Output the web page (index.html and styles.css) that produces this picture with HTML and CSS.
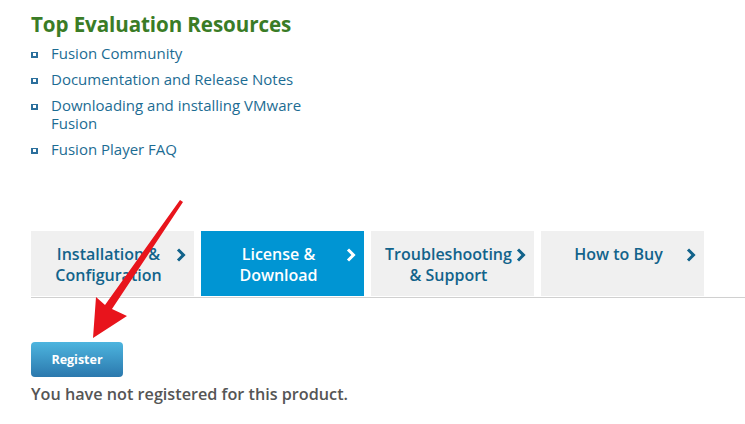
FILE: index.html
```html
<!DOCTYPE html>
<html>
<head>
<meta charset="utf-8">
<link rel="stylesheet" href="styles.css">
</head>
<body>
<div class="page">
  <h2 class="title">Top Evaluation Resources</h2>
  <ul class="links">
    <li><span class="bullet"></span><a>Fusion Community</a></li>
    <li><span class="bullet"></span><a>Documentation and Release Notes</a></li>
    <li><span class="bullet"></span><a>Downloading and installing VMware Fusion</a></li>
    <li><span class="bullet"></span><a>Fusion Player FAQ</a></li>
  </ul>
  <div class="tabs">
    <div class="tab"><span class="label">Installation &amp;<br>Configuration</span><svg class="chev" width="10" height="14" viewBox="0 0 10 14"><polyline points="2,1.5 7.5,7 2,12.5" fill="none" stroke="currentColor" stroke-width="3"/></svg></div>
    <div class="tab active"><span class="label">License &amp;<br>Download</span><svg class="chev" width="10" height="14" viewBox="0 0 10 14"><polyline points="2,1.5 7.5,7 2,12.5" fill="none" stroke="currentColor" stroke-width="3"/></svg></div>
    <div class="tab"><span class="label">Troubleshooting<br>&amp; Support</span><svg class="chev" width="10" height="14" viewBox="0 0 10 14"><polyline points="2,1.5 7.5,7 2,12.5" fill="none" stroke="currentColor" stroke-width="3"/></svg></div>
    <div class="tab"><span class="label">How to Buy</span><svg class="chev" width="10" height="14" viewBox="0 0 10 14"><polyline points="2,1.5 7.5,7 2,12.5" fill="none" stroke="currentColor" stroke-width="3"/></svg></div>
  </div>
  <div class="register">
    <button class="btn">Register</button>
    <p class="note">You have not registered for this product.</p>
  </div>
  <svg class="arrow" width="745" height="424" viewBox="0 0 745 424">
    <polygon fill="#e8141c" points="180,200 183,202 112,309 127,316 93,338 96,297 105,305"/>
  </svg>
</div>
</body>
</html>
```
FILE: styles.css
```css
* { box-sizing: border-box; }
html, body { margin: 0; padding: 0; background: #fff; }
body { font-family: "Open Sans", "Liberation Sans", sans-serif; }
.page { position: relative; width: 745px; height: 424px; overflow: hidden; padding: 11px 0 0 31px; }
.title { margin: 0; font-size: 20.6px; font-weight: 700; color: #3a7c26; line-height: 26px; letter-spacing: -0.1px; }
.links { list-style: none; margin: 7px 0 0 0; padding: 0; width: 300px; }
.links li { display: flex; align-items: flex-start; font-size: 15px; line-height: 18px; color: #1c6c93; margin-bottom: 8px; }
.links a { flex: 1; }
.bullet { display: inline-block; width: 7px; height: 6px; border: 2px solid #2b6f9c; border-top-width: 1px; margin: 8px 13px 0 0; flex: none; }
.tabs { display: flex; gap: 7px; margin-top: 73px; border-bottom: 1px solid #d0d0d0; padding-bottom: 1px; }
.tab { width: 163px; height: 65px; background: #f0f0f0; display: flex; align-items: flex-start; padding: 13px 8px 0 10px; color: #12638b; font-weight: 600; font-size: 16px; line-height: 21px; }
.tab .label { flex: 1; text-align: center; }
.tab .chev { flex: none; margin-top: 4px; }
.tab.active { background: #0095d3; color: #fff; }
.register { padding-top: 44px; }
.btn { display: block; width: 92px; height: 35px; border: none; border-radius: 4px; background: linear-gradient(#4db5df, #2b78ad); color: #fff; font-family: inherit; font-weight: 700; font-size: 12.5px; padding: 0; }
.note { margin: 6px 0 0 0; font-size: 16.2px; font-weight: 600; color: #555; }
.arrow { position: absolute; left: 0; top: 0; }
```
